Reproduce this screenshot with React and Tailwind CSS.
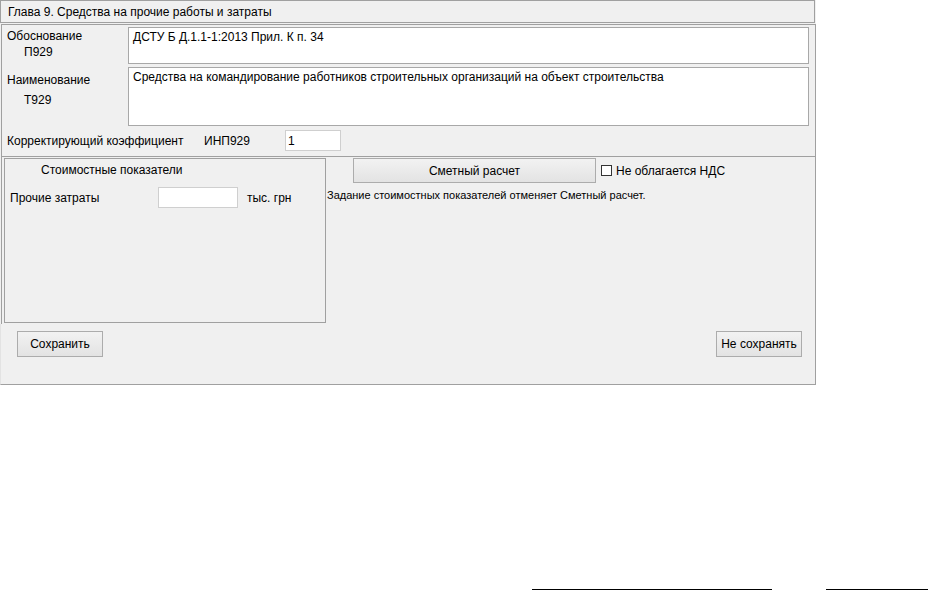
import React from 'react';

const border = 'border-[#a0a0a0]';

const Field = ({ className = '', children }) => (
  <div className={`bg-white border px-[4px] ${className}`}>{children}</div>
);

const Button = ({ className = '', children }) => (
  <button
    className={`border border-[#acacac] bg-gradient-to-b from-[#f2f2f2] to-[#e3e3e3] text-[12px] text-black flex items-center justify-center ${className}`}
  >
    {children}
  </button>
);

const ChapterForm = () => {
  return (
    <div className="w-[816px] bg-[#f0f0f0] text-black">
      {/* Chapter title */}
      <div className={`h-[23px] w-[815px] border ${border} flex items-center pl-[7px]`}>
        Глава 9. Средства на прочие работы и затраты
      </div>

      {/* Basis / name / coefficient */}
      <div className={`mt-[1px] ml-[1px] w-[815px] h-[132px] border-l border-r border-t ${border} flex flex-col pt-[2px]`}>
        <div className="flex h-[38px]">
          <div className="w-[126px] pl-[5px] pt-[1px] leading-[16px]">
            <div>Обоснование</div>
            <div className="pl-[17px]">П929</div>
          </div>
          <Field className="border-[#a8a8a8] w-[681px] h-[37px] pt-[2px] leading-[14px]">ДСТУ Б Д.1.1-1:2013 Прил. К п. 34</Field>
        </div>
        <div className="flex mt-[2px] h-[59px]">
          <div className="w-[126px] pl-[5px] pt-[3px] leading-[20px]">
            <div>Наименование</div>
            <div className="pl-[17px]">Т929</div>
          </div>
          <Field className="border-[#a8a8a8] w-[681px] h-[59px] pt-[2px] leading-[14px]">
            Средства на командирование работников строительных организаций на объект строительства
          </Field>
        </div>
        <div className="flex items-center mt-[4px] h-[21px]">
          <span className="pl-[5px] w-[202px]">Корректирующий коэффициент</span>
          <span className="w-[81px]">ИНП929</span>
          <Field className="border-[#cfcfcf] w-[56px] h-[21px] flex items-center pl-[2px]">1</Field>
        </div>
      </div>

      {/* Cost indicators and estimate */}
      <div className={`ml-[1px] w-[815px] h-[168px] border-l border-r border-t ${border} flex pt-[1px]`}>
        <div className={`ml-[2px] w-[322px] h-[165px] border ${border} flex flex-col`}>
          <div className="pl-[36px] pt-[2px] h-[21px]">Стоимостные показатели</div>
          <div className="flex items-center h-[21px] mt-[7px]">
            <span className="pl-[5px] w-[153px]">Прочие затраты</span>
            <Field className="border-[#cfcfcf] w-[80px] h-[21px]" />
            <span className="pl-[9px]">тыс. грн</span>
          </div>
        </div>
        <div className="flex flex-col ml-[1px]">
          <div className="flex items-center">
            <Button className="ml-[26px] w-[243px] h-[25px]">Сметный расчет</Button>
            <span className="ml-[5px] w-[11px] h-[11px] bg-white border border-[#333333]" />
            <span className="ml-[4px]">Не облагается НДС</span>
          </div>
          <div className="mt-[5px] leading-[15px] text-[11px]">Задание стоимостных показателей отменяет Сметный расчет.</div>
        </div>
      </div>

      {/* Save / discard */}
      <div className={`h-[61px] border-r border-b border-l ${border} border-l-[#e3e3e3] flex items-start justify-between pt-[7px] pl-[16px] pr-[13px]`}>
        <Button className="w-[86px] h-[26px]">Сохранить</Button>
        <Button className="w-[86px] h-[26px]">Не сохранять</Button>
      </div>
    </div>
  );
};

export default function App() {
  return (
    <div className="w-[928px] h-[590px] bg-white flex flex-col font-['Liberation_Sans',Arial,sans-serif] text-[12px]">
      <ChapterForm />
      <div className="mt-auto flex h-[1px]">
        <div className="ml-[532px] w-[240px] bg-black" />
        <div className="ml-[54px] w-[102px] bg-black" />
      </div>
    </div>
  );
}
